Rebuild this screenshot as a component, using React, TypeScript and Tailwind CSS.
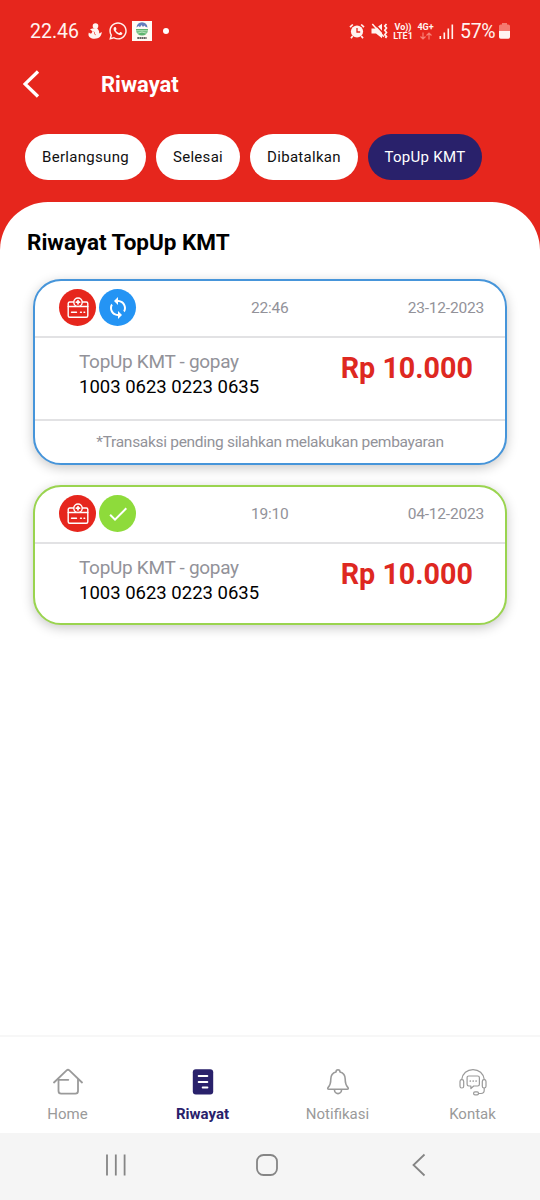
import { FaWhatsapp } from 'react-icons/fa';
import { MdCheck, MdSync } from 'react-icons/md';
import { clsx } from 'clsx';

const filters = [
    { label: 'Berlangsung', width: 'w-[121px]' },
    { label: 'Selesai', width: 'w-[84px]' },
    { label: 'Dibatalkan', width: 'w-[108px]' },
    { label: 'TopUp KMT', width: 'w-[114px]', active: true },
];

const transactions = [
    {
        id: 1,
        status: 'pending',
        time: '22:46',
        date: '23-12-2023',
        title: 'TopUp KMT - gopay',
        card: '1003 0623 0223 0635',
        amount: 'Rp 10.000',
        note: '*Transaksi pending silahkan melakukan pembayaran',
    },
    {
        id: 2,
        status: 'success',
        time: '19:10',
        date: '04-12-2023',
        title: 'TopUp KMT - gopay',
        card: '1003 0623 0223 0635',
        amount: 'Rp 10.000',
    },
];

const tabs = [
    { label: 'Home', icon: HomeIcon },
    { label: 'Riwayat', icon: HistoryIcon, active: true },
    { label: 'Notifikasi', icon: BellIcon },
    { label: 'Kontak', icon: HeadsetIcon },
];

function HomeIcon() {
    return (
        <svg width="30" height="28" viewBox="0 0 30 28" fill="none" stroke="currentColor" strokeWidth="1.8" strokeLinecap="round" strokeLinejoin="round">
            <path d="M1 14.5 13.6 2.4q1.4-1.2 2.8 0L29 14.5" />
            <path d="M5.5 11.5V23q0 2.6 2.6 2.6h14.300q2.600 0 2.600-2.600V11.500" />
            <path d="M5.500 11.800h9.800" />
        </svg>
    );
}

function HistoryIcon() {
    return (
        <svg width="30" height="28" viewBox="0 0 30 28" fill="none">
            <rect x="4.8" y="1.3" width="20.4" height="25.2" rx="3" fill="currentColor" />
            <path d="M10.700 8.100h8.600M10.700 13.900h8.600M14.700 19.600h4.700" stroke="#fff" strokeWidth="2" strokeLinecap="round" />
        </svg>
    );
}

function BellIcon() {
    return (
        <svg width="30" height="28" viewBox="0 0 30 28" fill="none" stroke="currentColor" strokeWidth="1.6" strokeLinecap="round" strokeLinejoin="round">
            <path d="M13 4a2 2.300 0 0 1 4 0c3.300.9 5.200 3.500 5.200 7.100 0 4.500.6 6.300 2.600 8.200q1.300 1.900-.8 2H6q-2.100-.1-.8-2c2-1.900 2.600-3.700 2.600-8.200 0-3.600 1.900-6.200 5.200-7.100Z" />
            <path d="M11.500 22a3.500 3.600 0 0 0 7 0" />
        </svg>
    );
}

function HeadsetIcon() {
    return (
        <svg width="30" height="28" viewBox="0 0 30 28" fill="none" stroke="currentColor" strokeWidth="1.2" strokeLinecap="round" strokeLinejoin="round">
            <path d="M3.700 11.500C4.500 5.400 9 1.600 15 1.600s10.500 3.800 11.300 9.900" />
            <rect x="2" y="11.6" width="3.7" height="8.4" rx="1.8" />
            <rect x="24.3" y="11.6" width="3.7" height="8.4" rx="1.8" />
            <path d="M26.200 20v2.300q0 3.200-3.200 3.200h-2.500" />
            <rect x="15.6" y="23.9" width="4.9" height="2.9" rx="1.4" />
            <path d="M10.800 8h8.900q1.700 0 1.700 1.700v6.600q0 1.700-1.700 1.700h-4l-2.800 2.600V18h-2.100q-1.700 0-1.700-1.700V9.700Q9.100 8 10.800 8Z" />
            <path d="M12.300 13h.01M15.200 13h.01M18.100 13h.01" strokeWidth="1.7" />
        </svg>
    );
}

function CardTopUpIcon() {
    return (
        <svg width="22" height="22" viewBox="0 0 22 22" fill="none" stroke="#fff" strokeWidth="1.4" strokeLinecap="round" strokeLinejoin="round">
            <path d="M7 5H2.700Q1.200 5 1.200 6.500v12.300q0 1.500 1.500 1.500h16.600q1.500 0 1.500-1.500V6.500Q20.800 5 19.300 5H15" />
            <path d="M1.200 9.500h19.600" />
            <circle cx="11" cy="5.2" r="4.2" fill="#e6261d" />
            <path d="M11 3.600v3.200M9.400 5.200h3.200" strokeWidth="1.7" />
            <path d="M4.500 15.300h5M13.500 15.300h.9M17 15.300h.7" />
        </svg>
    );
}

function StatusBar() {
    return (
        <div className="flex h-[62px] items-center justify-between px-[30px] text-[#fff3f0]">
            <div className="flex items-center">
                <span className="w-[58px] pt-px text-[19.5px] leading-[26px]">22.46</span>
                <svg width="14" height="16" viewBox="0 0 14 16" fill="currentColor">
                    <circle cx="7.5" cy="3" r="2.8" />
                    <path d="M4.500 5.500 2 6.300l1.500 1.200c1.300.6.900 1.700 0 2.700-.8.500-1.700.4-2.600-.6C-.6 13 2 15.700 6.500 15.700c4.600 0 7-2.400 7.300-6.700l-2.600 1.500c.2-2.600-1-4.300-2.300-5.500Z" />
                    <path d="M5.800 8.600c1.800 1.200-.6 2.600 2 3.200" fill="none" stroke="#e6261d" strokeWidth=".7" />
                </svg>
                <FaWhatsapp className="ml-[6px] size-[20px]" />
                <svg className="ml-[4px]" width="20" height="20" viewBox="0 0 20 20">
                    <path d="M0 0h20v20H0Z" fill="#fffaf5" />
                    <path d="M4.500 6.500Q5 1.500 10 1.300q5 .2 5.500 5.200l-2-.7-1.200-1.300L11 6 9.500 4 8 6.200 6.500 5Z" fill="#647dbd" />
                    <path d="M4 8h12v1.500q-1 5-6 5t-6-5Z" fill="#5db46f" />
                    <path d="M4 9.800h12M5 12.300q5-2.500 10 0" stroke="#d5f0d5" strokeWidth=".8" fill="none" />
                    <path d="M5.300 17h9.400" stroke="#333" strokeWidth="1.5" strokeDasharray="1.8 .4" />
                </svg>
                <span className="ml-[11px] size-[6px] rounded-full bg-white" />
            </div>
            <div className="flex items-center">
                <svg width="16" height="16" viewBox="0 0 16 16" fill="none" stroke="currentColor">
                    <circle cx="8" cy="8.5" r="6.1" fill="currentColor" stroke="none" />
                    <path d="M1 4.200 3.800 1.500M15 4.200l-2.800-2.700M3.700 13 2 15.200M12.300 13l1.700 2.200" strokeWidth="1.7" />
                    <path d="M8 5v4h3.200" stroke="#e6261d" strokeWidth="1.3" />
                </svg>
                <svg className="ml-[6px]" width="17" height="16" viewBox="0 0 17 16" fill="none" stroke="currentColor">
                    <path d="M.5 5.500h3.700L11 .8v14.400l-6-4.700H.5Z" fill="currentColor" stroke="none" />
                    <path d="m3 0 10.500 11.500" stroke="#e6261d" strokeWidth="1.4" />
                    <path d="m1.300 1 11.500 12.800" strokeWidth="1.5" />
                    <path d="m15.500 1-1.700 2 1.700 2-1.700 2.200 1.700 2.200-1.700 2.200 1.700 2-1 1.400" strokeWidth="1.7" />
                </svg>
                <div className="ml-[4px] flex w-[22px] flex-col items-center pt-px text-[9px] font-bold leading-[8.5px]">
                    <span className="whitespace-nowrap">Vo))</span>
                    <span>LTE1</span>
                </div>
                <div className="ml-[2px] flex w-[19px] flex-col items-center pt-px text-[9px] font-bold leading-[8.5px]">
                    <span>4G+</span>
                    <svg className="mt-px" width="12" height="8" viewBox="0 0 12 8" fill="none" stroke="#f77f75" strokeWidth="1.2">
                        <path d="M3 .5v6.500M.5 4.500 3 7l2.500-2.500M9 7.500V1M6.500 3.500 9 1l2.500 2.500" />
                    </svg>
                </div>
                <svg className="ml-[4px]" width="15" height="15" viewBox="0 0 15 15" fill="currentColor">
                    <rect x=".5" y="12" width="1.6" height="3" />
                    <rect x="4.5" y="8.5" width="1.6" height="6.5" />
                    <rect x="8.5" y="4.5" width="1.6" height="10.5" />
                    <rect x="12.5" y=".5" width="1.6" height="14.5" />
                </svg>
                <span className="ml-[6px] w-[39px] pt-px text-[19.5px] leading-[26px] tracking-[-0.3px]">57%</span>
                <svg width="11" height="16" viewBox="0 0 11 16">
                    <path d="M3 0h5v1.500h1.300Q11 1.500 11 3v5H0V3q0-1.500 1.700-1.500H3Z" fill="#f57a70" />
                    <path d="M0 8h11v6q0 1.700-1.700 1.700H1.700Q0 15.700 0 14Z" fill="currentColor" />
                </svg>
            </div>
        </div>
    );
}

function TransactionCard({ item }: { item: (typeof transactions)[number] }) {
    const pending = item.status === 'pending';
    return (
        <article
            className={clsx(
                'flex flex-col rounded-[28px] border-2 bg-white shadow-[0_3px_12px_rgba(0,0,0,0.22)]',
                pending ? 'h-[186px] border-[#4695da]' : 'h-[140px] border-[#9ad44f]'
            )}
        >
            <div className="flex h-[57px] shrink-0 items-center border-b-2 border-[#e2e2e4] pb-[2px] pl-[24px] pr-[21px] text-[15.5px] tracking-[-0.2px] text-[#929299]">
                <span className="flex size-[37px] items-center justify-center rounded-full bg-[#e6261d]">
                    <CardTopUpIcon />
                </span>
                <span
                    className={clsx(
                        'ml-[3px] flex size-[37px] items-center justify-center rounded-full text-white',
                        pending ? 'bg-[#2494f4]' : 'bg-[#8edb3b]'
                    )}
                >
                    {pending ? <MdSync className="size-[24px]" /> : <MdCheck className="size-[24px]" />}
                </span>
                <span className="ml-[115px] pt-[3px]">{item.time}</span>
                <span className="ml-auto pt-[3px]">{item.date}</span>
            </div>
            <div className="flex grow justify-between pl-[44px] pr-[32px]">
                <div className="pt-[11px] leading-[25.5px]">
                    <p className="text-[19px] tracking-[-0.3px] text-[#929299]">{item.title}</p>
                    <p className="text-[18.5px] text-black">{item.card}</p>
                </div>
                <p className="pt-[12px] text-[28.7px] font-bold leading-[36px] text-[#de2821]">{item.amount}</p>
            </div>
            {item.note && (
                <p className="h-[44px] shrink-0 border-t-2 border-[#e2e2e4] text-center text-[15.5px] leading-[43px] tracking-[-0.3px] text-[#929299]">
                    {item.note}
                </p>
            )}
        </article>
    );
}

export default function App() {
    return (
        <div className="flex h-[1200px] w-[540px] flex-col overflow-hidden bg-[#e6261d] font-['Roboto',sans-serif]">
            <StatusBar />

            <header className="flex h-[44px] items-center pl-[23px] text-white">
                <svg width="17" height="28" viewBox="0 0 17 28" fill="none" stroke="currentColor" strokeWidth="3.3">
                    <path d="M15 1.500 2 14l13 12.500" />
                </svg>
                <h1 className="ml-[61px] text-[22px] font-bold">Riwayat</h1>
            </header>

            <div className="flex gap-[10px] pb-[22px] pl-[25px] pt-[28px]">
                {filters.map((filter) => (
                    <button
                        key={filter.label}
                        className={clsx(
                            'h-[46px] rounded-full text-[15px] tracking-[0.3px]',
                            filter.width,
                            filter.active ? 'bg-[#29216b] text-white' : 'bg-white text-[#111]'
                        )}
                    >
                        {filter.label}
                    </button>
                ))}
            </div>

            <main className="grow rounded-t-[48px] bg-white">
                <h2 className="pl-[27px] pt-[24px] text-[22.5px] font-bold leading-[32px] text-black">Riwayat TopUp KMT</h2>
                <div className="mt-[21px] flex flex-col gap-[20px] px-[33px]">
                    {transactions.map((item) => (
                        <TransactionCard key={item.id} item={item} />
                    ))}
                </div>
            </main>

            {/* Tab bar */}
            <nav className="grid h-[98px] shrink-0 grid-cols-4 border-t-2 border-[#f7f7f7] bg-white">
                {tabs.map((tab) => (
                    <div
                        key={tab.label}
                        className={clsx(
                            'flex flex-col items-center pt-[31px] text-[15px]',
                            tab.active ? 'font-bold text-[#29216b]' : 'text-[#9a9a9a]'
                        )}
                    >
                        <tab.icon />
                        <span className="mt-[7px] leading-[22px]">{tab.label}</span>
                    </div>
                ))}
            </nav>

            {/* Android navigation */}
            <div className="flex h-[67px] shrink-0 items-center justify-between bg-[#f5f5f5] pb-[3px] pl-[104px] pr-[109px] text-[#858585]">
                <svg width="24" height="24" viewBox="0 0 24 24" stroke="currentColor" strokeWidth="1.8">
                    <path d="M3 1.500v21M11.800 1.500v21M20.600 1.500v21" />
                </svg>
                <svg width="24" height="24" viewBox="0 0 24 24" fill="none" stroke="currentColor" strokeWidth="1.8">
                    <rect x="1" y="2" width="20" height="20" rx="6.5" />
                </svg>
                <svg width="24" height="24" viewBox="0 0 24 24" fill="none" stroke="currentColor" strokeWidth="1.8">
                    <path d="M17.500 1.500 6.500 12l11 10.500" />
                </svg>
            </div>
        </div>
    );
}
